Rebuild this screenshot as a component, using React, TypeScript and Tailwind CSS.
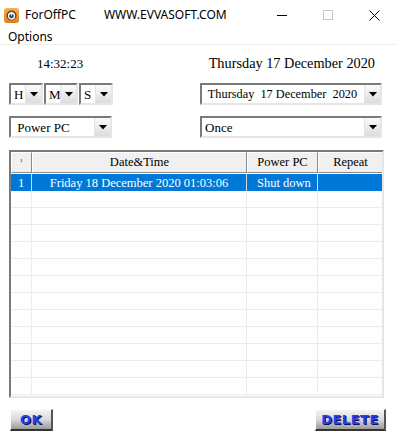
const serif = "font-['Liberation_Serif',serif]";

function Arrow() {
	return (
		<div className="w-[16px] h-full flex items-center justify-center bg-gradient-to-b from-[#fbfbfb] to-[#dcdcdc] border-l border-[#e4e4e4]">
			<svg width="8" height="5" viewBox="0 0 8 5">
				<path d="M0 0H8L4 4.5Z" fill="#000" />
			</svg>
		</div>
	);
}

function Combo({ label, width, className = "", size = "text-[13px]" }: { label: string; width: string; className?: string; size?: string }) {
	return (
		<div
			className={`${width} h-[22px] flex items-stretch bg-white border-2 border-t-[#7a7a7a] border-l-[#7a7a7a] border-b-[#e6e6e6] border-r-[#e6e6e6] ${className}`}
		>
			<div className={`flex-1 flex items-center pl-[3px] ${size} text-black leading-none whitespace-pre overflow-hidden ${serif}`}>
				{label}
			</div>
			<Arrow />
		</div>
	);
}

function TitleBar() {
	return (
		<div className="h-[30px] flex items-center font-['Noto_Sans',sans-serif] text-[12px] text-black">
			<div className="ml-[4px] w-[15px] h-[15px] rounded-[3px] bg-gradient-to-b from-[#f7b04a] to-[#e27d14] flex items-center justify-center">
				<svg width="11" height="11" viewBox="0 0 11 11">
					<circle cx="5.5" cy="5.5" r="5" fill="#4a4a4a" />
					<circle cx="5.5" cy="6" r="3" fill="none" stroke="#fff" strokeWidth="1.3" />
					<path d="M5.5 1.8V5.5" stroke="#fff" strokeWidth="1.3" />
				</svg>
			</div>
			<span className="ml-[6px]">ForOffPC</span>
			<span className="ml-[28px]">WWW.EVVASOFT.COM</span>
			<div className="ml-auto flex items-center">
				<div className="w-[46px] flex justify-center">
					<div className="w-[10px] h-px bg-black" />
				</div>
				<div className="w-[46px] flex justify-center">
					<div className="w-[10px] h-[10px] border border-[#c8c8c8]" />
				</div>
				<div className="w-[46px] flex justify-center">
					<svg width="11" height="11" viewBox="0 0 11 11">
						<path d="M0.5 0.5L10.5 10.5M10.5 0.5L0.5 10.5" stroke="#000" strokeWidth="1" />
					</svg>
				</div>
			</div>
		</div>
	);
}

const cols = "grid grid-cols-[21px_215px_71px_65px]";

function Table() {
	const empty = Array.from({ length: 12 });
	return (
		<div className={`ml-[9px] mr-[13px] mt-[12px] h-[248px] border-2 border-t-[#7a7a7a] border-l-[#7a7a7a] border-b-[#e6e6e6] border-r-[#e6e6e6] bg-white overflow-hidden text-[12.5px] whitespace-nowrap ${serif}`}>
			<div className={`${cols} h-[21px]`}>
				{["", "Date&Time", "Power PC", "Repeat"].map((h, i) => (
					<div
						key={i}
						className="flex items-center justify-center bg-[#f0f0f0] border border-t-white border-l-white border-b-[#8a8a8a] border-r-[#8a8a8a] text-black"
					>
						{i === 0 ? <span className="text-[7px] leading-none text-[#800000]">¹</span> : h}
					</div>
				))}
			</div>
			<div className={`${cols} h-[17px] bg-[#0078d7] text-white mt-px`}>
				<div className="flex items-center justify-center border-r border-[#d8d8d8]">1</div>
				<div className="flex items-center justify-center border-r border-[#d8d8d8]">Friday 18 December 2020 01:03:06</div>
				<div className="flex items-center pl-[10px] border-r border-[#d8d8d8]">Shut down</div>
				<div />
			</div>
			{empty.map((_, r) => (
				<div key={r} className={`${cols} h-[17px]`}>
					<div className="border-r border-b border-[#ececec]" />
					<div className="border-r border-b border-[#ececec]" />
					<div className="border-r border-b border-[#ececec]" />
					<div className="border-r border-b border-[#ececec]" />
				</div>
			))}
		</div>
	);
}

function BevelButton({ label, width }: { label: string; width: string }) {
	return (
		<div
			className={`${width} h-[22px] flex items-center justify-center bg-gradient-to-b from-[#f4f4f4] via-[#d9d9d9] to-[#9a9a9a] border-t border-l border-[#ffffff] border-r-2 border-b-2 border-r-[#555] border-b-[#333] font-['DejaVu_Sans',sans-serif] font-black text-[13px] tracking-[0.5px] text-[#2b3fe0] [text-shadow:1px_1px_0_#101060]`}
		>
			{label}
		</div>
	);
}

export default function App() {
	return (
		<div className="w-[397px] h-[438px] bg-white overflow-hidden">
			<TitleBar />
			<div className="h-[13px] flex items-center pl-[8px] font-['Noto_Sans',sans-serif] text-[12px] text-black">Options</div>
			<div className="h-px bg-[#f0f0f0] mt-px" />
			<div className={`h-[38px] flex items-center text-black ${serif}`}>
				<span className="ml-[37px] text-[13px]">14:32:23</span>
				<span className="ml-auto mr-[22px] text-[14.3px]">Thursday 17 December 2020</span>
			</div>
			<div className="flex items-center pl-[9px] pr-[15px]">
				<Combo label="H" width="w-[34px]" />
				<Combo label="M" width="w-[34px]" className="ml-[1px]" />
				<Combo label="S" width="w-[34px]" className="ml-[1px]" />
				<Combo label=" Thursday  17 December  2020" width="w-[182px]" className="ml-auto" size="text-[12.3px]" />
			</div>
			<div className="flex items-center pl-[9px] pr-[15px] mt-[11px]">
				<Combo label=" Power PC" width="w-[103px]" />
				<Combo label="Once" width="w-[182px]" className="ml-auto" />
			</div>
			<Table />
			<div className="flex items-center justify-between pl-[10px] pr-[11px] mt-[11px]">
				<BevelButton label="OK" width="w-[43px]" />
				<BevelButton label="DELETE" width="w-[71px]" />
			</div>
		</div>
	);
}
